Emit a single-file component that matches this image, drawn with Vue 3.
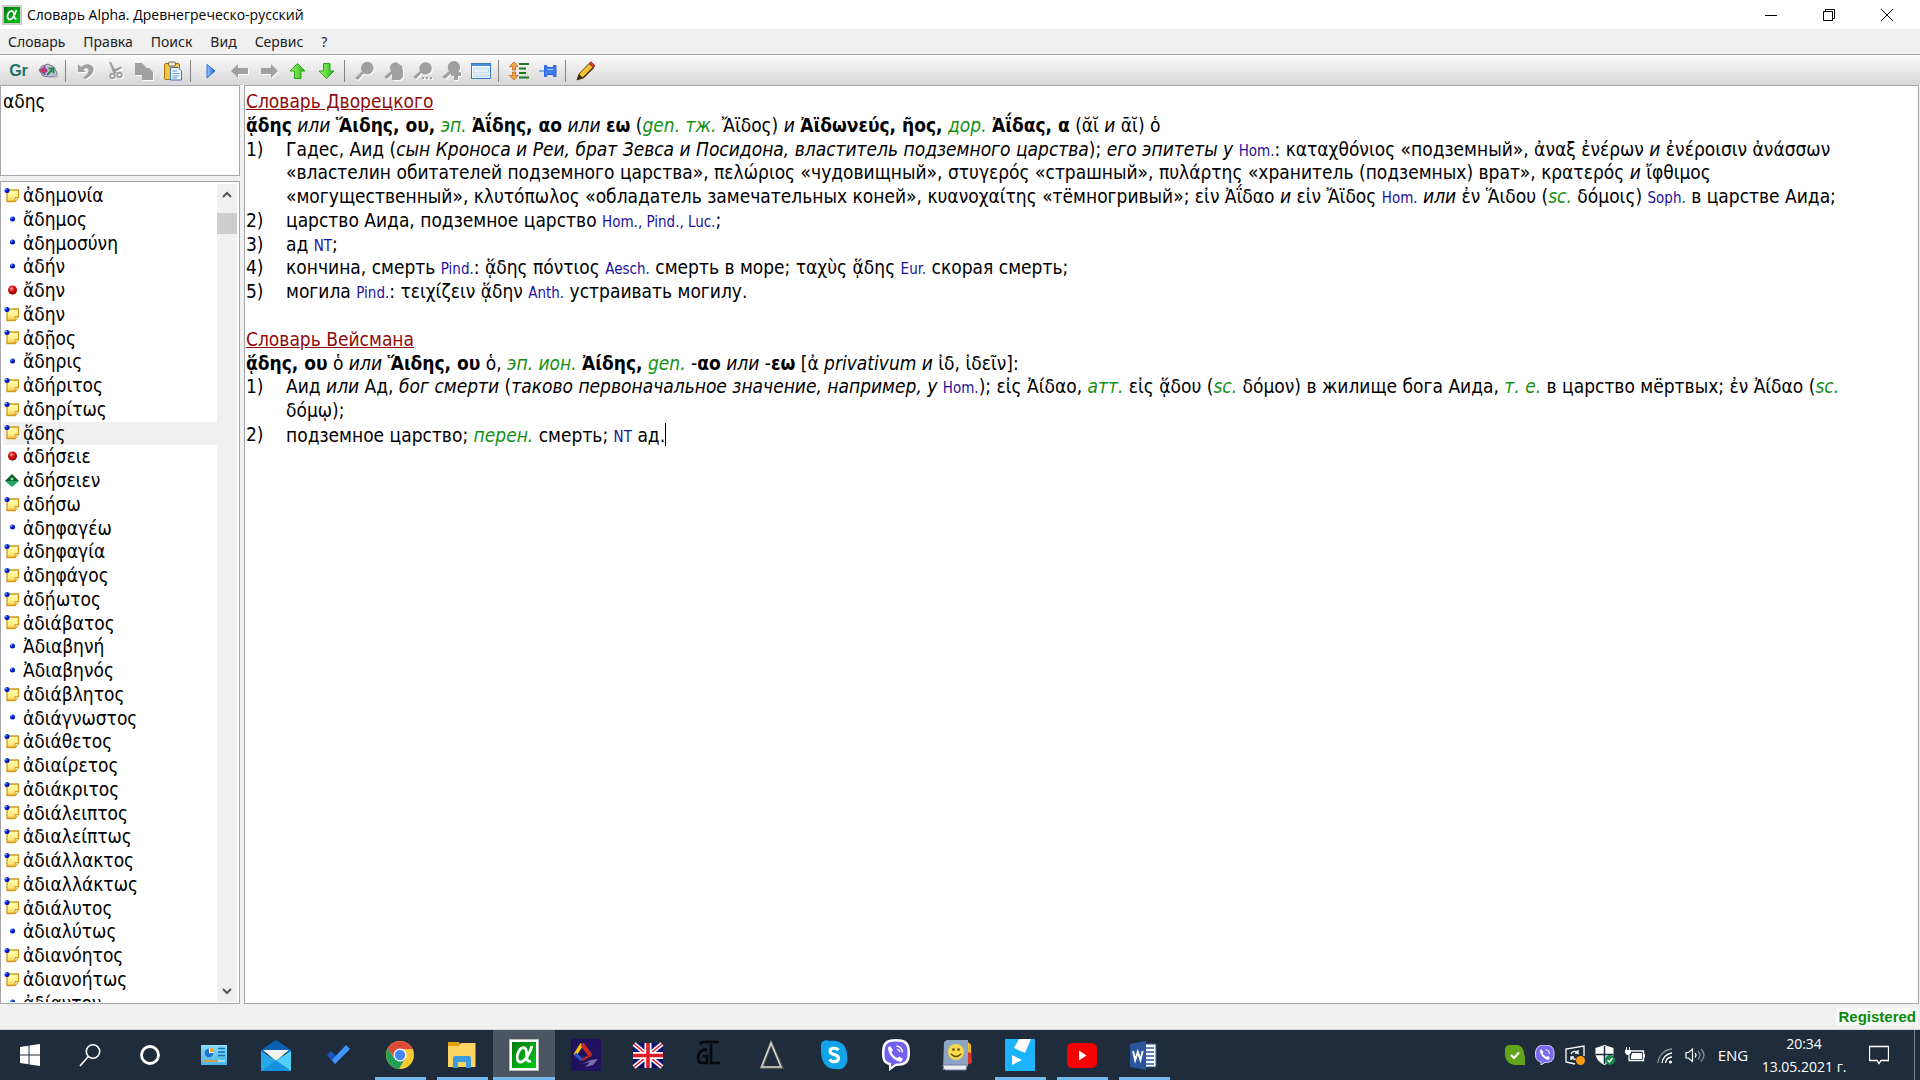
<script setup>
import { ref } from 'vue'

const query = ref('αδης')
const selected = ref('ᾅδης')

const menu = ['Словарь', 'Правка', 'Поиск', 'Вид', 'Сервис', '?']

// kind: note, dot, ball, gem
const words = [
  ['note', 'ἀδημονία'],
  ['dot', 'ἄδημος'],
  ['dot', 'ἀδημοσύνη'],
  ['dot', 'ἀδήν'],
  ['ball', 'ἄδην'],
  ['note', 'ἄδην'],
  ['note', 'ἀδῇος'],
  ['dot', 'ἄδηρις'],
  ['note', 'ἀδήριτος'],
  ['note', 'ἀδηρίτως'],
  ['note', 'ᾅδης'],
  ['ball', 'ἀδήσειε'],
  ['gem', 'ἀδήσειεν'],
  ['note', 'ἀδήσω'],
  ['dot', 'ἀδηφαγέω'],
  ['note', 'ἀδηφαγία'],
  ['note', 'ἀδηφάγος'],
  ['note', 'ἀδῄωτος'],
  ['note', 'ἀδιάβατος'],
  ['dot', 'Ἀδιαβηνή'],
  ['dot', 'Ἀδιαβηνός'],
  ['note', 'ἀδιάβλητος'],
  ['dot', 'ἀδιάγνωστος'],
  ['note', 'ἀδιάθετος'],
  ['note', 'ἀδιαίρετος'],
  ['note', 'ἀδιάκριτος'],
  ['note', 'ἀδιάλειπτος'],
  ['note', 'ἀδιαλείπτως'],
  ['note', 'ἀδιάλλακτος'],
  ['note', 'ἀδιαλλάκτως'],
  ['note', 'ἀδιάλυτος'],
  ['dot', 'ἀδιαλύτως'],
  ['note', 'ἀδιανόητος'],
  ['note', 'ἀδιανοήτως'],
  ['dot', 'ἀδίαντον']
]
</script>

<template>
  <div class="desktop">
    <svg class="defs" aria-hidden="true">
      <defs>
        <linearGradient id="alphaFill" x1="0" y1="0" x2="1" y2="1">
          <stop offset="0" stop-color="#007a0c" />
          <stop offset="1" stop-color="#00c814" />
        </linearGradient>
        <linearGradient id="noteFill" x1="0" y1="0" x2="0" y2="1">
          <stop offset="0" stop-color="#fffbb0" />
          <stop offset="0.6" stop-color="#fff08a" />
          <stop offset="1" stop-color="#ffc04a" />
        </linearGradient>
        <radialGradient id="ballFill" cx="0.4" cy="0.35" r="0.65">
          <stop offset="0" stop-color="#ffb0a8" />
          <stop offset="0.4" stop-color="#e01818" />
          <stop offset="1" stop-color="#8c0000" />
        </radialGradient>
        <radialGradient id="dotFill" cx="0.3" cy="0.3" r="0.8">
          <stop offset="0" stop-color="#4cc4ff" />
          <stop offset="0.4" stop-color="#0020e0" />
          <stop offset="1" stop-color="#0000a0" />
        </radialGradient>
        <linearGradient id="greenFill" x1="0" y1="0" x2="1" y2="0">
          <stop offset="0" stop-color="#9dfa6a" />
          <stop offset="1" stop-color="#2fb522" />
        </linearGradient>
        <linearGradient id="blueFill" x1="0" y1="0" x2="1" y2="0">
          <stop offset="0" stop-color="#9cc8ff" />
          <stop offset="1" stop-color="#1560e0" />
        </linearGradient>
        <linearGradient id="skyFill" x1="0" y1="0" x2="0" y2="1">
          <stop offset="0" stop-color="#8adcfa" />
          <stop offset="1" stop-color="#4ab4ea" />
        </linearGradient>
      </defs>
    </svg>

    <header class="titlebar">
      <svg class="app-icon" viewBox="0 0 20 20">
        <rect width="20" height="20" fill="#c9c9c9" />
        <rect x="2" y="2" width="16" height="16" fill="url(#alphaFill)" />
        <path d="M14.500 5C13 9 11 14.500 8 14.500C5 14.500 5 10.500 6.500 8C8.200 5.300 11 5 11.700 8C12.300 11 12 14.500 14.500 13.500" fill="none" stroke="#fff" stroke-width="1.8" />
      </svg>
      <h1>Словарь Alpha. Древнегреческо-русский</h1>
      <div class="window-buttons">
        <button type="button" aria-label="Свернуть">
          <svg viewBox="0 0 14 14"><path d="M1 7.500H13" /></svg>
        </button>
        <button type="button" aria-label="Восстановить">
          <svg viewBox="0 0 14 14"><path d="M1.500 3.500H10.500V12.500H1.500ZM3.500 3.500V1.500H12.500V10.500H10.500" /></svg>
        </button>
        <button type="button" aria-label="Закрыть">
          <svg viewBox="0 0 14 14"><path d="M1 1L13 13M13 1L1 13" /></svg>
        </button>
      </div>
    </header>

    <nav class="menubar">
      <button v-for="item in menu" :key="item" type="button">{{ item }}</button>
    </nav>

    <div class="toolbar">
      <button type="button" class="gr-btn" aria-label="Греческая раскладка">Gr</button>
      <button type="button" aria-label="Конвертер">
        <svg viewBox="0 0 20 20">
          <path d="M1 9L4 5L10 3L16 6L19 12L18 15L12 16L5 15Z" fill="#c8c4e0" stroke="#77748e" />
          <path d="M7 5L1.500 9.500L7 14V11H9V8H7Z" fill="#d8345c" stroke="#5848c0" stroke-width="0.800" />
          <path d="M9 14L14 9M10.500 7.500H15.500V12.500" fill="none" stroke="#128a3c" stroke-width="1.800" />
          <path d="M15 16L19 13V16Z" fill="#e8e8f4" stroke="#777" stroke-width="0.600" />
        </svg>
      </button>
      <span class="sep"></span>
      <button type="button" aria-label="Отменить">
        <svg class="off" viewBox="0 0 20 20">
          <path d="M2 3V11H10L7.500 8.500C9.500 6.500 12.500 7 12.500 9C12.500 12 10 14.500 7 17L10 18C15 15 18 11.500 17.500 7.500C16.500 3 9.500 1.500 5 6Z" />
        </svg>
      </button>
      <button type="button" aria-label="Вырезать">
        <svg class="off" viewBox="0 0 20 20">
          <path d="M4 1L6 1L10 8L16 5.500L17 7L11 10.500L12 12L9 13L7.500 10Z" />
          <g fill="none" stroke="#a0a0a0" stroke-width="2"><circle cx="7.500" cy="15" r="2.300" /><circle cx="14.500" cy="14" r="2.300" /></g>
        </svg>
      </button>
      <button type="button" aria-label="Копировать">
        <svg class="off" viewBox="0 0 20 20"><path d="M1 2H8L12 6V7H15L19 11V19H8V14H1Z" /></svg>
      </button>
      <button type="button" aria-label="Вставить">
        <svg viewBox="0 0 20 20">
          <rect x="1.500" y="2.500" width="15" height="16" rx="1.500" fill="#f1c544" stroke="#a87410" />
          <rect x="5.500" y="1" width="7" height="4" rx="1" fill="#eee8d0" stroke="#7a6a40" />
          <path d="M7.500 6.500H15L18.500 10V19H7.500Z" fill="#f2f7ff" stroke="#3c6eb4" />
          <path d="M9.500 10H14M9.500 12.500H16.500M9.500 15H16.500M9.500 17H14" stroke="#5c94dc" />
        </svg>
      </button>
      <span class="sep"></span>
      <button type="button" aria-label="Перевести">
        <svg viewBox="0 0 20 20"><path d="M6 3.500L14 10L6 17Z" fill="url(#blueFill)" stroke="#2a6cd8" /></svg>
      </button>
      <button type="button" aria-label="Назад">
        <svg class="off" viewBox="0 0 20 20"><path d="M1 10L8 3V7H18V13H8V17Z" /></svg>
      </button>
      <button type="button" aria-label="Вперёд">
        <svg class="off" viewBox="0 0 20 20"><path d="M19 10L12 3V7H2V13H12V17Z" /></svg>
      </button>
      <button type="button" aria-label="Вверх">
        <svg viewBox="0 0 20 20"><path d="M9.500 2.500L17 10H13V17.500H6.500V10H2Z" fill="url(#greenFill)" stroke="#2aa01c" /></svg>
      </button>
      <button type="button" aria-label="Вниз">
        <svg viewBox="0 0 20 20"><path d="M9.500 17.500L17 10H13V2.500H6.500V10H2Z" fill="url(#greenFill)" stroke="#2aa01c" /></svg>
      </button>
      <span class="sep"></span>
      <button type="button" aria-label="Найти">
        <svg class="off" viewBox="0 0 20 20"><path d="M0 17L7 10.500A6.300 6.300 0 1 1 10 13L8.500 12.500L3 19Z" /></svg>
      </button>
      <button type="button" aria-label="Найти в статье">
        <svg class="off" viewBox="0 0 20 20"><path d="M0 16L7 10A6 6 0 0 1 8 2.500L12 1L18 5L19 10V16L16 19H8V13L3 18Z" /></svg>
      </button>
      <button type="button" aria-label="Найти далее">
        <svg class="off" viewBox="0 0 20 20">
          <path d="M0 16L7 10A6.200 6.200 0 1 1 10 13L8.500 12L3 18Z" />
          <path d="M9 16H11V18H9ZM13 16H15V18H13ZM17 16H19V18H17Z" />
        </svg>
      </button>
      <button type="button" aria-label="Найти везде">
        <svg class="off" viewBox="0 0 20 20"><path d="M0 16L7 10A6.200 6.200 0 1 1 16.500 10.500L19 12V15H16V19H12V15H9V12.500L3 18Z" /></svg>
      </button>
      <button type="button" aria-label="Панель">
        <svg viewBox="0 0 20 20">
          <rect x="0.500" y="2.500" width="19" height="15" fill="#fff" stroke="#3b78c8" />
          <path d="M1 3H19V5H1Z" fill="#4a90e0" />
          <path d="M2.500 7H17.500V12H2.500ZM2.500 14H17.500V16H2.500Z" fill="#e4effc" stroke="#9cc0ea" stroke-width="0.600" />
        </svg>
      </button>
      <span class="sep"></span>
      <button type="button" aria-label="Развернуть">
        <svg viewBox="0 0 20 20">
          <path d="M5 1L9 5.500H6.500V9H3.500V5.500H0.500ZM5 19L9 14.500H6.500V11H3.500V14.500H0.500Z" fill="#f4a640" stroke="#b86a14" stroke-width="0.800" />
          <path d="M10 3H20M10 7.500H17M10 12H17M10 16.500H20" stroke="#1e7a1e" stroke-width="2.200" />
        </svg>
      </button>
      <button type="button" aria-label="Закрепить">
        <svg viewBox="0 0 20 20">
          <path d="M1 10H7" stroke="#5a8ee8" stroke-width="1.400" />
          <path d="M6.500 4.500H8.500L9.500 6.500H15.500V4.500H18V15.500H15.500V13.500H9.500L8.500 15.500H6.500Z" fill="#3f7cf0" stroke="#2a62d8" />
          <path d="M9.500 8.500H15" stroke="#9cc4ff" stroke-width="1.200" />
        </svg>
      </button>
      <span class="sep"></span>
      <button type="button" aria-label="Редактировать">
        <svg viewBox="0 0 20 20">
          <path d="M1 19L3 13L13 2.500L17.500 6.500L7 17Z" fill="#f6c02c" stroke="#6a4a10" />
          <path d="M1 19L3 13L7 17Z" fill="#332a20" />
          <path d="M13 2.500L15 0.800L19 4.500L17.500 6.500Z" fill="#d83a30" stroke="#7c1a14" stroke-width="0.700" />
          <path d="M7 17L17.500 6.500" stroke="#4a3410" stroke-width="1.600" />
        </svg>
      </button>
    </div>

    <main class="work">
      <aside class="side">
        <textarea v-model="query" class="query" aria-label="Искать слово" spellcheck="false"></textarea>
        <div class="wordlist">
          <ul>
            <li v-for="([kind, word], i) in words" :key="i" :class="{ current: word === selected }" @click="selected = word">
              <svg viewBox="0 0 16 16">
                <template v-if="kind === 'note'">
                  <path d="M3 2H14.500V9.500L11 13.500H3Z" fill="url(#noteFill)" stroke="#cf9a1c" stroke-width="1.300" />
                  <path d="M11 13V9.500H14.500" fill="#fff3b0" stroke="#cf9a1c" />
                  <circle cx="3" cy="2.500" r="2.500" fill="url(#dotFill)" />
                </template>
                <circle v-else-if="kind === 'dot'" cx="8.500" cy="7" r="2.500" fill="url(#dotFill)" />
                <circle v-else-if="kind === 'ball'" cx="8.500" cy="7" r="4.500" fill="url(#ballFill)" />
                <template v-else>
                  <path d="M8 1L15 8H1Z" fill="#0a5a22" />
                  <path d="M1 8H15L8 14Z" fill="#1fa868" />
                  <circle cx="8" cy="6" r="1.500" fill="#7fe0b0" />
                </template>
              </svg>
              <span>{{ word }}</span>
            </li>
          </ul>
          <div class="scrollbar">
            <button type="button" aria-label="Прокрутить вверх">
              <svg viewBox="0 0 12 12"><path d="M2 8L6 4L10 8" /></svg>
            </button>
            <span class="thumb"></span>
            <button type="button" class="down" aria-label="Прокрутить вниз">
              <svg viewBox="0 0 12 12"><path d="M2 4L6 8L10 4" /></svg>
            </button>
          </div>
        </div>
      </aside>

      <article class="entry">
        <section>
          <h2><a href="#dvoretsky">Словарь Дворецкого</a></h2>
          <p><b>ᾅδης</b> <i>или</i> <b>Ἅιδης, ου,</b> <i class="gram">эп.</i> <b>Ἀΐδης, αο</b> <i>или</i> <b>εω</b> (<i class="gram">gen. тж.</i> Ἄϊδος) <i>и</i> <b>Ἀϊδωνεύς, ῆος,</b> <i class="gram">дор.</i> <b>Ἀΐδας, α</b> (ᾰῐ <i>и</i> ᾱῐ) ὁ</p>
          <ol>
            <li>
              <span class="num">1)</span>
              <span>Гадес, Аид (<i>сын Кроноса и Реи, брат Зевса и Посидона, властитель подземного царства</i>); <i>его эпитеты у</i> <small>Hom.</small>: καταχθόνιος «подземный», ἀναξ ἐνέρων <i>и</i> ἐνέροισιν ἀνάσσων<br>«властелин обитателей подземного царства», πελώριος «чудовищный», στυγερός «страшный», πυλάρτης «хранитель (подземных) врат», κρατερός <i>и</i> ἴφθιμος<br>«могущественный», κλυτόπωλος «обладатель замечательных коней», κυανοχαίτης «тёмногривый»; εἰν Ἀΐδαο <i>и</i> εἰν Ἄϊδος <small>Hom.</small> <i>или</i> ἐν Ἅιδου (<i class="gram">sc.</i> δόμοις) <small>Soph.</small> в царстве Аида;</span>
            </li>
            <li>
              <span class="num">2)</span>
              <span>царство Аида, подземное царство <small>Hom., Pind., Luc.</small>;</span>
            </li>
            <li>
              <span class="num">3)</span>
              <span>ад <small>NT</small>;</span>
            </li>
            <li>
              <span class="num">4)</span>
              <span>кончина, смерть <small>Pind.</small>: ᾅδης πόντιος <small>Aesch.</small> смерть в море; ταχὺς ᾅδης <small>Eur.</small> скорая смерть;</span>
            </li>
            <li>
              <span class="num">5)</span>
              <span>могила <small>Pind.</small>: τειχίζειν ᾅδην <small>Anth.</small> устраивать могилу.</span>
            </li>
          </ol>
        </section>
        <section>
          <h2><a href="#weisman">Словарь Вейсмана</a></h2>
          <p><b>ᾅδης, ου</b> ὁ <i>или</i> <b>Ἅιδης, ου</b> ὁ, <i class="gram">эп. ион.</i> <b>Ἀίδης,</b> <i class="gram">gen.</i> -<b>αο</b> <i>или</i> -<b>εω</b> [ἀ <i>privativum и</i> ἰδ, ἰδεῖν]:</p>
          <ol>
            <li>
              <span class="num">1)</span>
              <span>Аид <i>или</i> Ад, <i>бог смерти</i> (<i>таково первоначальное значение, например, у</i> <small>Hom.</small>); εἰς Ἀίδαο, <i class="gram">атт.</i> εἰς ᾅδου (<i class="gram">sc.</i> δόμον) в жилище бога Аида, <i class="gram">т. е.</i> в царство мёртвых; ἐν Ἀίδαο (<i class="gram">sc.</i><br>δόμῳ);</span>
            </li>
            <li>
              <span class="num">2)</span>
              <span>подземное царство; <i class="gram">перен.</i> смерть; <small>NT</small> ад.<span class="caret"></span></span>
            </li>
          </ol>
        </section>
      </article>
    </main>

    <footer class="status"><span>Registered</span></footer>

    <div class="taskbar">
      <div class="sys">
        <button type="button" aria-label="Пуск">
          <svg viewBox="0 0 32 32"><path d="M6 8L14.500 6.700V15.500H6ZM15.500 6.500L26 5V15.500H15.500ZM6 16.500H14.500V25.300L6 24ZM15.500 16.500H26V27L15.500 25.500Z" fill="#fff" /></svg>
        </button>
        <button type="button" aria-label="Поиск">
          <svg viewBox="0 0 32 32"><g fill="none" stroke="#fff" stroke-width="1.600"><circle cx="19" cy="12.500" r="6.700" /><path d="M14.300 17.500L6 27" /></g></svg>
        </button>
        <button type="button" aria-label="Кортана">
          <svg viewBox="0 0 32 32"><circle cx="16" cy="16" r="8.500" fill="none" stroke="#fff" stroke-width="2.800" /></svg>
        </button>
      </div>
      <div class="apps">
        <button type="button" aria-label="Панель управления">
          <svg viewBox="0 0 32 32">
            <rect x="3" y="6" width="26" height="20" fill="url(#skyFill)" />
            <circle cx="11" cy="14" r="4.500" fill="#fff" />
            <path d="M11 14V9.500A4.500 4.500 0 1 0 15.500 14Z" fill="#1a74c8" />
            <path d="M12 13V8.500A4.500 4.500 0 0 1 16 13Z" fill="#f2a024" />
            <path d="M20 9.500H27M20 13H27M20 16.500H27" stroke="#1670b8" stroke-width="1.600" />
            <path d="M6 22H19" stroke="#f49a1a" stroke-width="1.600" />
            <path d="M20 22H27" stroke="#fff" />
          </svg>
        </button>
        <button type="button" aria-label="Почта">
          <svg viewBox="0 0 32 32">
            <path d="M1 11L16 1L31 11V14H1Z" fill="#0a62b4" />
            <path d="M3 11H29L16 22Z" fill="#f4f4f4" />
            <path d="M1 12L16 21.500L31 12V32H1Z" fill="#28a8ea" />
            <path d="M16 21.500L31 12V32Z" fill="#50d0f8" />
            <path d="M1 32L16 21.500L31 32Z" fill="#1890e0" />
          </svg>
        </button>
        <button type="button" aria-label="To Do">
          <svg viewBox="0 0 32 32">
            <path d="M5 16L9 12L17 20L13 25Z" fill="#1c54c0" />
            <path d="M13 25L10 21L24 6L28 10Z" fill="#3e96fa" />
          </svg>
        </button>
        <button type="button" class="running" aria-label="Chrome">
          <svg viewBox="0 0 32 32">
            <circle cx="16" cy="16" r="14" fill="#fcc934" />
            <path d="M4 9A14 14 0 0 0 15 30L21 19.500L10 19Z" fill="#22a05a" />
            <path d="M4 9L10.500 19.500L16 10H28.500A14 14 0 0 0 4 9Z" fill="#dc4a3c" />
            <circle cx="16" cy="16" r="6.500" fill="#fff" />
            <circle cx="16" cy="16" r="5.200" fill="#4486f4" />
          </svg>
        </button>
        <button type="button" class="running" aria-label="Проводник">
          <svg viewBox="0 0 32 32">
            <path d="M2 3H13L15 6H29V10H2Z" fill="#e0a010" />
            <path d="M2 7H13L15 4H29.500V28H2Z" fill="#fcd462" />
            <path d="M7 29V19Q7 17 9 17H23Q25 17 25 19V29H20V23H12V29Z" fill="#3c9ade" />
          </svg>
        </button>
        <button type="button" class="running active" aria-label="Alpha">
          <svg viewBox="0 0 32 32">
            <rect x="1" width="30" height="32" fill="#b8b8b8" />
            <rect x="2" y="1" width="28" height="30" fill="#fff" />
            <rect x="4" y="3" width="24" height="26" fill="url(#alphaFill)" />
            <path d="M24 7C22 14 17 23 12.500 23C8.500 23 8.500 17 10.500 13C13 7.500 18 7 18.500 13C19 18 18 24 23 22" fill="none" stroke="#fff" stroke-width="2.800" />
          </svg>
        </button>
        <button type="button" aria-label="Редактор">
          <svg viewBox="0 0 32 32">
            <rect x="1" width="30" height="32" rx="1" fill="#20125e" />
            <path d="M12 5L5 16" stroke="#f2c418" stroke-width="3.500" />
            <path d="M12 5L21 17" stroke="#d02a20" stroke-width="4" />
            <path d="M5 15L12 21" stroke="#2458c8" stroke-width="3.500" />
            <path d="M12 21L21 16" stroke="#b0282c" stroke-width="2.400" />
            <path d="M12 25L21 21L28 20L23 26L15 28L20 23Z" fill="#7a70a8" />
          </svg>
        </button>
        <button type="button" aria-label="English">
          <svg viewBox="0 0 32 32">
            <rect x="1" y="4" width="30" height="25" fill="#101070" />
            <path d="M2 5L30 28M30 5L2 28" stroke="#fff" stroke-width="4.500" />
            <path d="M2 5L30 28M30 5L2 28" stroke="#e01c28" stroke-width="1.600" />
            <path d="M16 4V29M1 16.500H31" stroke="#fff" stroke-width="7" />
            <path d="M16 4V29M1 16.500H31" stroke="#e01c28" stroke-width="3.600" />
          </svg>
        </button>
        <button type="button" aria-label="Greek Tools">
          <svg viewBox="0 0 32 32">
            <path d="M13 11C4 8 1 24 8 24H13V17H9M8 3H25M8 3L6 5M17 5V24H26" fill="none" stroke="#05090d" stroke-width="2.600" />
          </svg>
        </button>
        <button type="button" aria-label="Delta">
          <svg viewBox="0 0 32 32">
            <path d="M15 4L6 28.500H26Z" fill="none" stroke="#55534e" stroke-width="3" />
            <path d="M15 4L5.500 28H25Z" fill="none" stroke="#d4d2cc" stroke-width="1.600" />
          </svg>
        </button>
        <button type="button" aria-label="Skype">
          <svg viewBox="0 0 32 32">
            <path d="M3 8C2 3 7 0 12 2C22 0 30 7 29 17C31 25 25 32 19 30C9 31 2 24 3 8Z" fill="#12a4e8" />
            <path d="M20.500 11C18 8.500 12 8.500 12 12.200C12 16.500 20.500 14.500 20.500 19.200C20.500 23.500 14 23.500 11.500 20.500" fill="none" stroke="#fff" stroke-width="3.200" />
          </svg>
        </button>
        <button type="button" aria-label="Viber">
          <svg viewBox="0 0 32 32">
            <path d="M16 0C27 0 30 4 30 14C30 23 27 27 16 27L9 32V26C3 24 2 21 2 14C2 4 5 0 16 0Z" fill="#fff" />
            <path d="M16 2.500C25 2.500 27.500 5 27.500 14C27.500 22 25 24.500 16 24.500L11 28V24C5 22.500 4.500 20 4.500 14C4.500 5 7 2.500 16 2.500Z" fill="#7360f2" />
            <path d="M10 7L13 11L11.500 13C12.500 16 14.500 18 17.500 19L19.500 17.500L23 20L21 23C14 22 8 15 8 8.500Z" fill="#fff" />
            <path d="M16.500 7C20 7.500 22 10 22.500 13.500M17 10C18.500 10.500 19.500 11.500 19.800 13" fill="none" stroke="#fff" stroke-width="1.300" />
          </svg>
        </button>
        <button type="button" aria-label="Словарь">
          <svg viewBox="0 0 32 32">
            <path d="M25 3L29 5L30 24L25 26Z" fill="#d8342c" />
            <path d="M26 3L29 6V14L26 13Z" fill="#e8b828" />
            <path d="M2 3L5 1H26V26L24 31H1Z" fill="#8ea4c4" />
            <path d="M1 26H25L24 31H3Q1 30 1 26Z" fill="#eef0f4" stroke="#6c7c98" />
            <circle cx="14" cy="13" r="8" fill="#f8d84c" />
            <circle cx="11.500" cy="10.500" r="1.300" fill="#5a4408" />
            <circle cx="16.500" cy="10.500" r="1.300" fill="#5a4408" />
            <path d="M9 15Q14 20 19 15" fill="none" stroke="#5a4408" stroke-width="1.400" />
          </svg>
        </button>
        <button type="button" class="running" aria-label="Заметки">
          <svg viewBox="0 0 32 32">
            <rect x="1" width="30" height="32" fill="#1cb2fc" />
            <path d="M15 0H27L21 14L10 9ZM8 16L18 21L8 26Z" fill="#fff" />
          </svg>
        </button>
        <button type="button" class="running" aria-label="YouTube">
          <svg viewBox="0 0 32 32">
            <rect x="1" y="4" width="30" height="25" rx="5" fill="#f60002" />
            <path d="M13 11.500L20.500 16.500L13 21.500Z" fill="#fff" />
          </svg>
        </button>
        <button type="button" class="running" aria-label="Word">
          <svg viewBox="0 0 32 32">
            <rect x="16" y="5" width="12" height="23" fill="#fff" stroke="#2b579a" />
            <path d="M18 9H26M18 13H26M18 17H26M18 21H26M18 25H26" stroke="#2b579a" stroke-width="1.600" />
            <path d="M2 5L18 2V31L2 28Z" fill="#2b579a" />
            <path d="M5 12L7.200 21L9.800 13L12.400 21L14.700 12" fill="none" stroke="#fff" stroke-width="2" />
          </svg>
        </button>
      </div>
      <div class="tray">
        <button type="button" aria-label="Skype: в сети">
          <svg viewBox="0 0 20 20">
            <path d="M0 5Q0 0 5 0H13Q19 2 19 9Q21 13 20 20H9Q1 18 0 11Z" fill="#63a51a" />
            <path d="M6 10L9 13L14 7.500" fill="none" stroke="#fff" stroke-width="2" />
          </svg>
        </button>
        <button type="button" aria-label="Viber">
          <svg viewBox="0 0 20 20">
            <path d="M10 0C17 0 19 3 19 9C19 15 17 17.500 10 17.500L6 20V17C2 16 0.500 14 0.500 9C0.500 3 3 0 10 0Z" fill="#7a6af0" stroke="#d8d4fa" />
            <path d="M6 4L8.500 7L7.500 8.500L11 12L13 11L15 13L13.500 15C9 14 5 9.500 5 5.500Z" fill="#fff" />
            <path d="M10.500 4.500Q14.500 5 14.500 9" fill="none" stroke="#fff" />
          </svg>
        </button>
        <button type="button" aria-label="Обновление">
          <svg viewBox="0 0 20 20">
            <path d="M10 19L1 17V4L19 1V11M6 9A4 4 0 0 1 13 8V5M13 8H10M6 15V12H9M6 12Q8 15 11 14" fill="none" stroke="#fff" stroke-width="1.300" />
            <circle cx="15.500" cy="15.500" r="4.500" fill="#ff9a10" />
          </svg>
        </button>
        <button type="button" aria-label="Безопасность">
          <svg viewBox="0 0 20 20">
            <path d="M9.500 0L18.500 3V9C18 14 14 18 9.500 20C5 18 1 14 0.500 9V3Z" fill="#fff" />
            <path d="M9.500 1V19M1 9.500H18" stroke="#1c2b3a" stroke-width="1.500" />
            <circle cx="15" cy="15" r="5" fill="#14884c" />
            <path d="M12.500 15L14.500 17L17.500 13" fill="none" stroke="#fff" stroke-width="1.400" />
          </svg>
        </button>
        <button type="button" aria-label="Батарея">
          <svg viewBox="0 0 20 20">
            <path d="M6 6H18.500V15.500H4V10" fill="none" stroke="#fff" stroke-width="1.300" />
            <path d="M7 8H17V14H6V11Z" fill="#fff" />
            <path d="M19 9H20V12.500H19ZM0 5H6V8L4 10H2L0 8ZM1 2H2V5H1ZM4 2H5V5H4Z" fill="#fff" />
          </svg>
        </button>
        <button type="button" aria-label="Сеть">
          <svg viewBox="0 0 20 20">
            <g fill="none" stroke="#fff" stroke-width="1.300">
              <path d="M3 18A15 15 0 0 1 17 4" opacity="0.500" />
              <path d="M7 18A11 11 0 0 1 17 8M10.500 18A7 7 0 0 1 17 12" />
            </g>
            <circle cx="15.500" cy="17" r="1.600" fill="#fff" />
          </svg>
        </button>
        <button type="button" aria-label="Громкость">
          <svg viewBox="0 0 20 20">
            <g fill="none" stroke="#fff" stroke-width="1.200">
              <path d="M1 7.500H3.500L7.500 4V16.500L3.500 13H1Z" />
              <path d="M10 8Q12 10 10 12.500" />
              <path d="M13 6Q17 10 13 14.500M16 4Q22 10 16 16.500" opacity="0.500" />
            </g>
          </svg>
        </button>
        <button type="button" class="lang">ENG</button>
        <button type="button" class="clock"><span>20:34</span><span>13.05.2021 г.</span></button>
        <button type="button" class="notify" aria-label="Уведомления">
          <svg viewBox="0 0 20 20"><path d="M0.500 1.500H19.500V15.500H12L10 18.500L8 15.500H0.500Z" fill="none" stroke="#fff" stroke-width="1.300" /></svg>
        </button>
        <span class="peek"></span>
      </div>
    </div>
  </div>
</template>

<style>
body {
  margin: 0;
}
</style>

<style scoped>
.desktop {
  display: flex;
  flex-direction: column;
  height: 100vh;
  background: #f0f0f0;
  color: #000;
  font-family: "DejaVu Sans Condensed", "Noto Sans", sans-serif;
  overflow: hidden;
}

.defs {
  position: absolute;
  width: 0;
  height: 0;
}

button {
  display: flex;
  align-items: center;
  justify-content: center;
  padding: 0;
  border: 0;
  background: none;
  color: inherit;
  font: inherit;
}

h1,
h2,
p,
ul,
ol {
  margin: 0;
  padding: 0;
  list-style: none;
  font-weight: 400;
}

/* Window frame */
.titlebar {
  display: flex;
  align-items: center;
  height: 29px;
  padding: 0 4px 0 2px;
  background: #fff;
  font-family: "Open Sans", "Noto Sans", sans-serif;
}

.titlebar h1 {
  flex: 1;
  font-size: 14px;
}

.app-icon {
  width: 20px;
  height: 20px;
  margin-right: 5px;
}

.window-buttons {
  display: flex;
}

.window-buttons button {
  width: 58px;
  height: 29px;
}

.window-buttons svg {
  width: 14px;
  height: 14px;
  fill: none;
  stroke: #000;
}

.menubar {
  display: flex;
  gap: 1px;
  height: 25px;
  border-bottom: 1px solid #a0a0a0;
  color: #222;
  font-family: "Noto Sans", sans-serif;
  font-size: 14px;
}

.menubar button {
  padding: 0 9px 1px 8px;
}

.toolbar {
  display: flex;
  align-items: center;
  height: 29px;
  padding-left: 4px;
  border-top: 1px solid #fff;
  background: linear-gradient(#fbfbfb, #d6d6d6);
}

.toolbar button {
  width: 29px;
  height: 28px;
}

.toolbar svg {
  width: 20px;
  height: 20px;
}

.toolbar .gr-btn {
  color: #1c7468;
  font-family: "Liberation Sans", sans-serif;
  font-size: 16px;
  font-weight: 700;
}

.toolbar .off {
  fill: #a0a0a0;
  filter: drop-shadow(1px 1px 0 #fff);
}

.sep {
  width: 1px;
  height: 22px;
  margin: 0 5px 0 3px;
  background: #848484;
}

/* Panels */
.work {
  display: flex;
  flex: 1;
  gap: 4px;
  min-height: 0;
  padding-right: 1px;
  font-size: 19px;
  line-height: 1.25;
}

.side {
  display: flex;
  flex-direction: column;
  gap: 5px;
  width: 240px;
}

.query,
.wordlist,
.entry {
  box-sizing: border-box;
  border: 1px solid #a5a5ae;
  background: #fff;
}

.query {
  display: block;
  width: 100%;
  height: 91px;
  padding: 4px 2px;
  outline: 0;
  resize: none;
  color: #000;
  font: inherit;
}

.wordlist {
  display: flex;
  flex: 1;
  min-height: 0;
  padding: 2px 2px 1px;
}

.wordlist ul {
  flex: 1;
  overflow: hidden;
}

.wordlist li {
  display: flex;
  align-items: center;
  gap: 3px;
  padding-left: 1px;
  white-space: nowrap;
}

.wordlist li.current {
  background: #f0f0f0;
}

.wordlist li svg {
  width: 16px;
  height: 16px;
}

.scrollbar {
  display: flex;
  flex-direction: column;
  width: 20px;
  background: #f0f0f0;
}

.scrollbar button {
  height: 22px;
}

.scrollbar .down {
  margin-top: auto;
}

.scrollbar svg {
  width: 12px;
  height: 12px;
  fill: none;
  stroke: #555;
  stroke-width: 2;
}

.thumb {
  height: 21px;
  margin-top: 7px;
  background: #cdcdcd;
}

.entry {
  flex: 1;
  min-width: 0;
  padding: 4px 1px;
  overflow: hidden;
  white-space: nowrap;
}

.entry section + section {
  margin-top: 24px;
}

.entry h2 {
  font-size: 19px;
}

.entry h2 a {
  color: #900a0a;
}

.entry li {
  display: flex;
}

.num {
  width: 40px;
}

.gram {
  color: #149014;
}

.entry small {
  color: #1c109c;
  font-size: 15px;
  line-height: 1;
}

.caret {
  display: inline-block;
  height: 23px;
  border-left: 1px solid #000;
  vertical-align: text-bottom;
}

.status {
  display: flex;
  align-items: center;
  justify-content: flex-end;
  height: 25px;
  padding-right: 2px;
  border-bottom: 1px solid #d8d8d8;
}

.status span {
  padding: 0 2px;
  background: #fafafa;
  color: #0a8a0a;
  font: 700 15px/17px "Liberation Sans", sans-serif;
}

/* Taskbar */
.taskbar {
  display: flex;
  height: 50px;
  background: #1e2c3b;
  color: #fff;
  font-family: "Open Sans", "Noto Sans", sans-serif;
  font-size: 15px;
}

.sys,
.apps,
.tray {
  display: flex;
}

.sys button {
  width: 60px;
}

.apps {
  flex: 1;
  padding-left: 3px;
}

.apps button {
  box-sizing: border-box;
  width: 62px;
}

.sys svg,
.apps svg {
  width: 32px;
  height: 32px;
}

.apps .running {
  background: linear-gradient(#76b9ed, #76b9ed) center bottom / 51px 3px no-repeat;
}

.apps .running.active {
  background: linear-gradient(#76b9ed, #76b9ed) center bottom / 62px 3px no-repeat, #4b5662;
}

.tray button {
  width: 30px;
}

.tray svg {
  width: 20px;
  height: 20px;
}

.tray .lang {
  width: 46px;
}

.tray .clock {
  flex-direction: column;
  width: 96px;
  font-size: 14px;
  line-height: 23px;
}

.tray .notify {
  width: 54px;
}

.peek {
  margin: 0 5px 0 8px;
  border-left: 1px solid #7c858e;
}
</style>
